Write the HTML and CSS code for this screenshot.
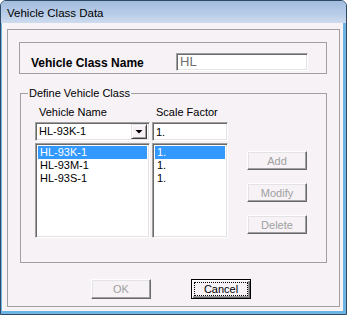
FILE: index.html
```html
<!DOCTYPE html>
<html lang="en">
<head>
  <meta charset="UTF-8"/>
  <title>Vehicle Class Data</title>
  <link rel="stylesheet" href="styles.css">
</head>
<body>
  <div class="window">
    <div class="titlebar">Vehicle Class Data</div>
    <div class="client">
      <div class="frame">
        <div class="name-group">
          <span class="name-label">Vehicle Class Name</span>
          <div class="sunken name-field">HL</div>
        </div>

        <div class="define-group">
          <div class="legend">Define Vehicle Class</div>
          <div class="columns">
            <div class="col col-name">
              <div class="col-label">Vehicle Name</div>
              <div class="sunken combo">
                <span class="combo-text">HL-93K-1</span>
                <span class="combo-btn">
                  <svg width="14" height="13" viewBox="0 0 14 13"><polygon points="3.5,5 10.5,5 7,8.5" fill="#000"/></svg>
                </span>
              </div>
              <ul class="sunken listbox">
                <li class="selected">HL-93K-1</li>
                <li>HL-93M-1</li>
                <li>HL-93S-1</li>
              </ul>
            </div>
            <div class="col col-scale">
              <div class="col-label">Scale Factor</div>
              <div class="sunken scale-field">1.</div>
              <ul class="sunken listbox">
                <li class="selected">1.</li>
                <li>1.</li>
                <li>1.</li>
              </ul>
            </div>
            <div class="side-buttons">
              <button class="btn" disabled>Add</button>
              <button class="btn" disabled>Modify</button>
              <button class="btn" disabled>Delete</button>
            </div>
          </div>
        </div>

        <div class="dialog-buttons">
          <button class="btn btn-wide" disabled>OK</button>
          <button class="btn btn-wide default"><span class="focus">Cancel</span></button>
        </div>
      </div>
    </div>
  </div>
</body>
</html>
```

FILE: styles.css
```css
body { margin: 0; font-family: "Liberation Sans", Arial, sans-serif; font-size: 11px; color: #000; }
.window { width: 347px; height: 315px; box-sizing: border-box; border: 1px solid #2e4a66; border-radius: 6px 6px 0 0; background: #c4d6ec; display: flex; flex-direction: column; overflow: hidden; }
.titlebar { height: 22px; flex: none; padding-left: 6px; line-height: 24px; font-size: 11.5px; background: linear-gradient(#a2bcde, #b9cde8 60%, #cddbee); }
.client { flex: 1; background: #f6f2f6; border: solid #6cb4e4; border-width: 0 3px 3px 1px; display: flex; flex-direction: column; }

.frame { margin: 6px 3px 0 5px; padding: 12px 12px 7px 11px; border: 1px solid #a0a0a0; }

.sunken { box-sizing: border-box; background: #fff; border: 1px solid; border-color: #a0a0a0 #fff #fff #a0a0a0; box-shadow: inset 1px 1px #696969, inset -1px -1px #e3e3e3; }

.name-group { height: 32px; box-sizing: border-box; border: 1px solid #a0a0a0; display: flex; justify-content: space-between; align-items: flex-start; padding: 10px 18px 0 11px; }
.name-label { font-size: 12px; font-weight: bold; line-height: 20px; }
.name-field { width: 132px; height: 18px; padding-left: 3px; font-size: 13px; line-height: 15px; color: #6d6d6d; }

.define-group { margin: 19px 0 0 1px; height: 170px; box-sizing: border-box; border: 1px solid #a0a0a0; }
.legend { width: fit-content; margin: -7px 0 0 7px; padding: 0 1px; line-height: 13px; background: #f6f2f6; }
.columns { display: flex; margin-top: 6px; padding-left: 14px; }
.col { display: flex; flex-direction: column; }
.col-name { width: 115px; }
.col-scale { width: 76px; margin-left: 2px; }
.col-label { line-height: 13px; padding-left: 4px; }

.combo { margin-top: 3px; height: 19px; display: flex; align-items: center; padding: 2px; }
.combo-text { padding-left: 1px; line-height: 15px; }
.combo-btn { margin-left: auto; width: 16px; height: 15px; box-sizing: border-box; background: #f6f2f6; border: 1px solid; border-color: #e3e3e3 #404040 #404040 #e3e3e3; box-shadow: inset 1px 1px #fff, inset -1px -1px #a0a0a0; display: flex; }
.scale-field { margin-top: 3px; height: 19px; padding: 2px 0 0 3px; line-height: 15px; }

.listbox { list-style: none; margin: 2px 0 0; padding: 2px; height: 95px; }
.listbox li { line-height: 13px; padding-left: 2px; }
.listbox li.selected { background: #3399ff; color: #fff; }

.side-buttons { margin-left: 19px; padding-top: 45px; display: flex; flex-direction: column; gap: 13px; }

.btn { width: 60px; height: 19px; box-sizing: border-box; padding: 0; font-family: inherit; font-size: 11px; color: #000; background: #f6f2f6; border: 1px solid; border-color: #fff #696969 #696969 #fff; box-shadow: inset -1px -1px #a0a0a0, inset 1px 1px #e3e3e3; display: flex; align-items: center; justify-content: center; }
.btn:disabled { color: #a0a0a0; }
.btn-wide { height: 20px; }
.btn.default { border: 1px solid #000; box-shadow: inset 1px 1px #fff, inset -1px -1px #696969, inset -2px -2px #a0a0a0; align-items: stretch; }
.focus { flex: 1; margin: 2px; border: 1px dotted #000; display: flex; align-items: center; justify-content: center; line-height: 12px; }

.dialog-buttons { display: flex; gap: 40px; margin: 16px 0 0 72px; }
```
